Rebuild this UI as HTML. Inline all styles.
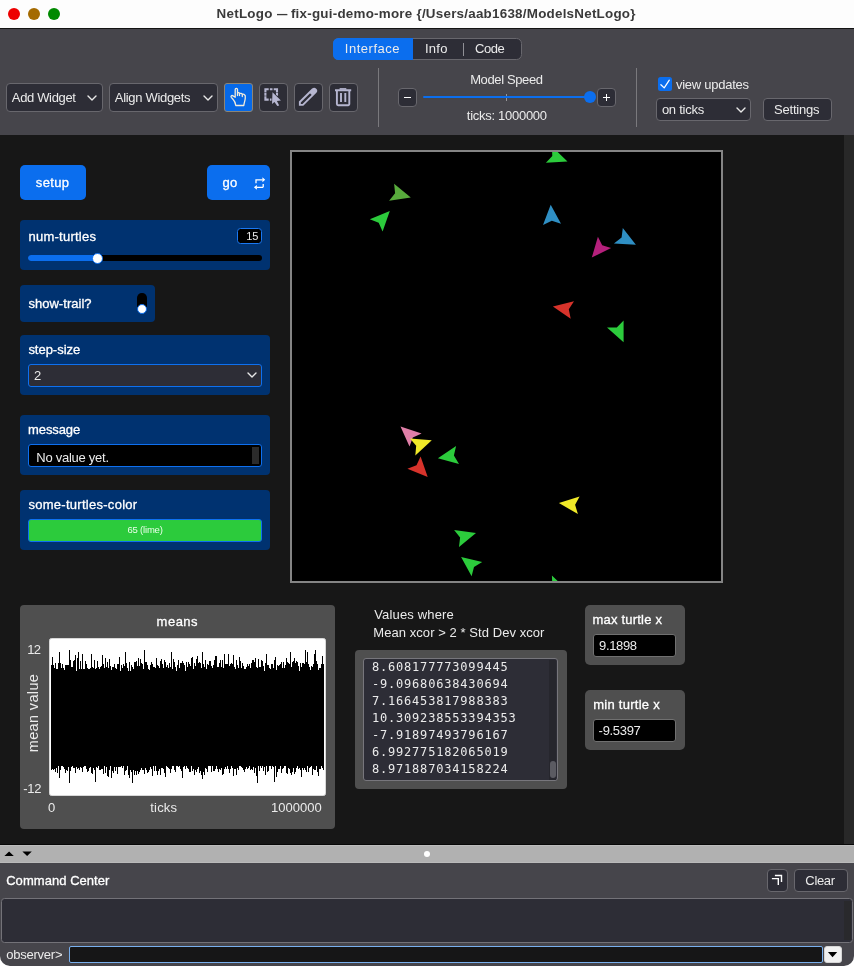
<!DOCTYPE html>
<html lang="en"><head><meta charset="utf-8"><title>NetLogo — fix-gui-demo-more</title>
<style>
*{box-sizing:border-box;margin:0;padding:0}
html,body{width:854px;height:966px;overflow:hidden;background:#171717}
body{position:relative;font-family:"Liberation Sans",sans-serif;font-size:13px;color:#ebebeb}
.b{color:#fff}
#app{position:absolute;left:0;top:0;width:854px;height:966px;will-change:transform}
.a{position:absolute}
.t{position:absolute;white-space:nowrap;line-height:16px;height:16px}
.c{transform:translateX(-50%)}
.r{transform:translateX(-100%)}
#titlebar{left:0;top:0;width:854px;height:28px;background:#fdfdfd}
#titleline{left:0;top:28px;width:854px;height:1px;background:#141414}
.dot{width:12px;height:12px;border-radius:6px;top:8px}
#title{font-weight:bold;color:#3a3a3a;-webkit-text-stroke:0}
#toolbar{left:0;top:29px;width:854px;height:106px;background:#46454b}
.btn{background:#2d2d36;border:1px solid #68676d;border-radius:4px}
.blue{background:#0b6eee}
.sep{width:1px;background:#7a797d}
.wid{background:#003270;border-radius:4px}
.gray{background:#4f4f4f;border-radius:4px}
.em{display:inline-block;width:10.4px;transform:scaleX(0.776);transform-origin:0 50%}
.b{-webkit-text-stroke:0.3px currentColor}
svg{position:absolute;overflow:visible}
</style></head>
<body>
<div id="app">
<div class="a" id="titlebar"></div><div class="a" id="titleline"></div>
<div class="a dot" style="left:8px;background:#ed0000"></div>
<div class="a dot" style="left:28px;background:#a46a00"></div>
<div class="a dot" style="left:48px;background:#008a00"></div>
<div class="t b" id="title" style="left:216.62px;top:6.00px;font-size:13.4px;letter-spacing:0.239px;color:#3a3a3a;">NetLogo <span class="em">—</span> fix-gui-demo-more {/Users/aab1638/ModelsNetLogo}</div>
<div class="a" id="toolbar"></div>
<div class="a btn" style="left:333px;top:37.8px;width:189px;height:22px;border-radius:5.5px"></div>
<div class="a blue" style="left:333px;top:37.8px;width:80px;height:22px;border-radius:5.5px 0 0 5.5px"></div>
<div class="a" style="left:463px;top:43px;width:1px;height:13px;background:#909096"></div>
<div class="t" id="tx_interface" style="left:344.86px;top:41.00px;letter-spacing:0.517px;">Interface</div>
<div class="t" id="tx_info" style="left:424.98px;top:41.00px;letter-spacing:0.264px;">Info</div>
<div class="t" id="tx_code" style="left:474.98px;top:41.00px;letter-spacing:-0.476px;">Code</div>
<div class="a btn" style="left:6.2px;top:83.2px;width:96.6px;height:28.6px"></div>
<div class="t" id="tx_addw" style="left:11.85px;top:90.00px;letter-spacing:-0.348px;">Add Widget</div>
<svg style="left:87.4px;top:95px" width="10" height="6" viewBox="0 0 10 6"><path d="M1,1 L5,5 L9,1" fill="none" stroke="#e8e8e8" stroke-width="1.4" stroke-linecap="round" stroke-linejoin="round"/></svg>
<div class="a btn" style="left:109px;top:83.2px;width:108.7px;height:28.6px"></div>
<div class="t" id="tx_alignw" style="left:114.85px;top:90.00px;letter-spacing:-0.312px;">Align Widgets</div>
<svg style="left:202.5px;top:95px" width="10" height="6" viewBox="0 0 10 6"><path d="M1,1 L5,5 L9,1" fill="none" stroke="#e8e8e8" stroke-width="1.4" stroke-linecap="round" stroke-linejoin="round"/></svg>
<div class="a btn" style="left:224.2px;top:83.1px;width:28.7px;height:28.7px;background:#0669e8;border-color:#8c8576;border-radius:3px"></div>
<div class="a btn" style="left:259.2px;top:83.1px;width:28.7px;height:28.7px"></div>
<div class="a btn" style="left:294.2px;top:83.1px;width:28.7px;height:28.7px"></div>
<div class="a btn" style="left:329.2px;top:83.1px;width:28.7px;height:28.7px"></div>
<svg style="left:0;top:0" width="854" height="140" viewBox="0 0 854 140"><path d="M235.2,97.2 V89.5 a1.15,1.15 0 0 1 2.3,0 V95.6 M237.5,93 q0.3,-0.4 1.0,-0.3 t1.0,0.6 V95.6 M239.5,93.6 q0.5,-0.4 1.4,-0.2 t1.4,0.7 V96.5 M242.3,94.3 q0.7,-0.3 1.6,0 t1.35,1.5 V98 C245.2,100.5 244.3,102 243.8,105.5 H235.8 C235.4,102.5 234.6,101 233.2,99.5 L231.3,97.3 a1.1,1.1 0 0 1 1.3,-1.7 L235.2,97.2" fill="none" stroke="#f2ecdc" stroke-width="1.3" stroke-linejoin="round" stroke-linecap="round"/><path d="M265.40,92.50 V89.20 H268.70 M273.70,89.20 H277.00 V92.50 M265.40,96.30 V99.60 H268.70 M269.90,89.20 H272.50 M265.40,93.10 V95.70 M269.90,99.60 H272.50 M277.00,93.10 V95.70 " fill="none" stroke="#b6b6d0" stroke-width="2.1" stroke-linejoin="miter"/><path d="M272.5,92.3 L272.0,104.1 L274.45,102.0 L277.3,106.0 L279.2,105.5 L276.9,100.9 L280.95,100.4 Z" fill="#b6b6d0" stroke="#2d2d36" stroke-width="1.3" stroke-linejoin="round" paint-order="stroke"/><path d="M299.85,104.85 V101.98 L312.72,89.22 A2.1,2.1 0 0 1 315.68,92.18 L302.92,104.85 Z" fill="none" stroke="#b6b6d0" stroke-width="1.9" stroke-linejoin="miter"/><path d="M309.27,92.57 L312.72,89.22 A2.1,2.1 0 0 1 315.68,92.18 L312.24,95.54 Z" fill="#b6b6d0"/><path d="M335,90.3 H351.2 M336.9,91 V104 a1.2,1.2 0 0 0 1.2,1.2 H348.1 a1.2,1.2 0 0 0 1.2,-1.2 V91 M341,93 V102 M345.3,93 V102" fill="none" stroke="#b6b6d0" stroke-width="1.9"/><rect x="339.6" y="88.1" width="6.7" height="1.6" fill="#b6b6d0"/></svg>
<div class="a sep" style="left:378.1px;top:67.8px;height:59.4px"></div>
<div class="a sep" style="left:636.1px;top:67.8px;height:59.4px"></div>
<div class="a btn" style="left:398px;top:87.9px;width:19.1px;height:19.3px"></div>
<div class="a" style="left:403.8px;top:96.6px;width:7.6px;height:1.8px;background:#fff"></div>
<div class="a btn" style="left:597px;top:87.9px;width:19.1px;height:19.3px"></div>
<div class="a" style="left:602.8px;top:96.55px;width:7.5px;height:1.8px;background:#fff"></div>
<div class="a" style="left:605.55px;top:93.75px;width:1.8px;height:7.5px;background:#fff"></div>
<div class="a" style="left:506px;top:94px;width:1px;height:7px;background:#98979a"></div>
<div class="a" style="left:423px;top:95.95px;width:167px;height:2.1px;background:#0b6eee;border-radius:1px"></div>
<div class="a" style="left:583.9px;top:90.85px;width:12.3px;height:12.3px;border-radius:6.2px;background:#0b6eee"></div>
<div class="t" id="tx_speed" style="left:470.15px;top:72.00px;letter-spacing:-0.372px;">Model Speed</div>
<div class="t" id="tx_ticks" style="left:466.86px;top:108.00px;letter-spacing:-0.282px;">ticks: 1000000</div>
<div class="a blue" style="left:658px;top:77.1px;width:13.9px;height:13.9px;border-radius:2.5px"></div>
<svg style="left:658px;top:77px" width="14" height="14" viewBox="0 0 14 14"><path d="M2.9,7.7 L6.2,10.9 L11.3,3.2" fill="none" stroke="#fff" stroke-width="1.25" stroke-linecap="round" stroke-linejoin="round"/></svg>
<div class="t" id="tx_viewupd" style="left:675.91px;top:77.00px;letter-spacing:-0.254px;">view updates</div>
<div class="a btn" style="left:656.3px;top:98.2px;width:94.3px;height:22.4px"></div>
<div class="t" id="tx_onticks" style="left:661.88px;top:102.00px;letter-spacing:-0.253px;">on ticks</div>
<svg style="left:735.7px;top:106.7px" width="10" height="6" viewBox="0 0 10 6"><path d="M1,1 L5,5 L9,1" fill="none" stroke="#e8e8e8" stroke-width="1.4" stroke-linecap="round" stroke-linejoin="round"/></svg>
<div class="a btn" style="left:763.3px;top:98.2px;width:68.5px;height:22.4px"></div>
<div class="t" id="tx_settings" style="left:774.00px;top:102.00px;letter-spacing:-0.198px;">Settings</div>
<div class="a" style="left:843.8px;top:135px;width:10.2px;height:710px;background:#282828"></div>
<div class="a blue" style="left:20.25px;top:165px;width:65.75px;height:34.5px;border-radius:5px"></div>
<div class="t b" id="tx_setup" style="left:35.79px;top:175.00px;letter-spacing:0.380px;">setup</div>
<div class="a blue" style="left:206.75px;top:165px;width:63.25px;height:34.5px;border-radius:5px"></div>
<div class="t b" id="tx_go" style="left:222.50px;top:175.00px;letter-spacing:0.201px;">go</div>
<svg style="left:0;top:0" width="280" height="200" viewBox="0 0 280 200"><path d="M256,183.2 V179.8 H262.6 M263.2,187.3 H257 M263.2,184 V187.3" fill="none" stroke="#fff" stroke-width="1.3"/><path d="M262.4,177.3 L265.2,179.8 L262.4,182.2 Z M256.9,184.9 L253.9,187.3 L256.9,189.7 Z" fill="#fff"/></svg>
<div class="a wid" style="left:20.25px;top:220px;width:249.75px;height:49.5px"></div>
<div class="t b" id="tx_numt" style="left:28.52px;top:229.00px;letter-spacing:0.243px;">num-turtles</div>
<div class="a" style="left:237px;top:227.5px;width:24.75px;height:16.25px;background:#000;border:1px solid #1a78f2;border-radius:3.5px"></div>
<div class="t" id="tx_15" style="left:246.27px;top:228.00px;font-size:11px;letter-spacing:-0.187px;">15</div>
<div class="a" style="left:28.25px;top:255px;width:233.5px;height:6px;border-radius:3px;background:#000"></div>
<div class="a" style="left:28.25px;top:255px;width:70px;height:6px;border-radius:3px;background:#0b6eee"></div>
<div class="a" style="left:92.2px;top:252.85px;width:10.8px;height:10.8px;border-radius:5.4px;background:#fff;border:0.8px solid #0b6eee"></div>
<div class="a wid" style="left:20.25px;top:285px;width:134.25px;height:36.5px"></div>
<div class="t b" id="tx_showtrail" style="left:28.39px;top:296.00px;letter-spacing:0.036px;">show-trail?</div>
<div class="a" style="left:137px;top:293px;width:9.5px;height:20.25px;border-radius:4.75px;background:#000"></div>
<div class="a" style="left:136.75px;top:303.9px;width:10px;height:10px;border-radius:5px;background:#fff;border:1px solid #0b6eee"></div>
<div class="a wid" style="left:20.25px;top:335px;width:249.75px;height:59.5px"></div>
<div class="t b" id="tx_stepsize" style="left:28.39px;top:342.00px;letter-spacing:-0.025px;">step-size</div>
<div class="a" style="left:28.25px;top:364px;width:233.75px;height:22.85px;background:#2d2d36;border:1px solid #0e70f0;border-radius:3px"></div>
<div class="t" id="tx_2" style="left:34.10px;top:368.00px;">2</div>
<svg style="left:246.5px;top:372.4px" width="10" height="6" viewBox="0 0 10 6"><path d="M1,1 L5,5 L9,1" fill="none" stroke="#e8e8e8" stroke-width="1.4" stroke-linecap="round" stroke-linejoin="round"/></svg>
<div class="a wid" style="left:20.25px;top:415px;width:249.75px;height:59.5px"></div>
<div class="t b" id="tx_message" style="left:28.11px;top:422.00px;letter-spacing:-0.124px;">message</div>
<div class="a" style="left:28.25px;top:444px;width:233.75px;height:22.85px;background:#000;border:1px solid #0e70f0;border-radius:3px"></div>
<div class="a" style="left:252px;top:447px;width:7.2px;height:16.85px;background:#2b2b2b"></div>
<div class="t" id="tx_novalue" style="left:36.31px;top:450.00px;letter-spacing:-0.262px;">No value yet.</div>
<div class="a wid" style="left:20.25px;top:490px;width:249.75px;height:59.5px"></div>
<div class="t b" id="tx_stc" style="left:28.39px;top:497.00px;letter-spacing:0.279px;">some-turtles-color</div>
<div class="a" style="left:28.25px;top:519px;width:233.75px;height:22.85px;background:#2ccb3c;border:1px solid #0e70f0;border-radius:3px"></div>
<div class="t" id="tx_lime" style="left:127.50px;top:522.00px;font-size:9.5px;letter-spacing:-0.202px;color:#e9ffe9;">65 (lime)</div>
<div class="a" style="left:290px;top:150px;width:433px;height:433px;background:#000;border:2px solid #848484"></div>
<svg style="left:292px;top:152px;overflow:hidden" width="429" height="429" viewBox="0 0 429 429"><polygon fill="#2ccb3c" points="275.5,9.4 253.9,10.7 260.3,3.9 259.9,-5.5"/>
<polygon fill="#2ccb3c" points="275.5,438.4 253.9,439.7 260.3,432.9 259.9,423.5"/>
<polygon fill="#58ab3c" points="118.8,45.4 102.1,31.8 103.1,41.2 97.1,48.8"/>
<polygon fill="#2ccb3c" points="97.8,59.0 77.8,67.2 86.7,70.7 90.6,79.5"/>
<polygon fill="#2f8fc4" points="258.7,52.8 251.0,73.0 259.8,68.8 269.0,71.7"/>
<polygon fill="#2f8fc4" points="343.9,92.7 330.8,76.1 329.6,85.4 321.9,91.4"/>
<polygon fill="#b5207c" points="299.8,105.6 305.9,84.8 310.2,93.2 319.1,96.0"/>
<polygon fill="#d7332b" points="260.9,154.4 282.0,149.2 276.8,157.3 278.7,166.7"/>
<polygon fill="#2ccb3c" points="331.6,190.3 315.0,175.6 324.8,175.4 331.6,168.5"/>
<polygon fill="#e07fa8" points="108.5,274.4 129.6,281.4 120.8,285.5 117.5,294.6"/>
<polygon fill="#f0e928" points="139.8,288.3 118.0,286.4 124.2,293.8 123.3,303.6"/>
<polygon fill="#2ccb3c" points="145.9,306.2 164.1,294.1 161.9,303.6 167.0,312.0"/>
<polygon fill="#d7332b" points="135.7,325.0 115.4,316.7 124.5,313.3 128.6,304.6"/>
<polygon fill="#f0e928" points="266.9,351.1 287.6,344.4 283.1,352.8 285.9,362.0"/>
<polygon fill="#2ccb3c" points="184.0,381.0 162.1,378.1 168.1,385.5 167.0,395.0"/>
<polygon fill="#2ccb3c" points="169.1,405.0 190.2,409.9 182.0,414.9 179.6,424.3"/></svg>
<div class="a gray" style="left:20.25px;top:605px;width:314.75px;height:224px"></div>
<div class="t b" id="tx_means" style="left:156.57px;top:614.00px;letter-spacing:0.502px;">means</div>
<div class="a" style="left:48.5px;top:638.3px;width:277px;height:157.7px;background:#fff;border:1px solid #d8d8d8;border-radius:2.5px"></div>
<svg style="left:48px;top:638px" width="278" height="159" viewBox="0 0 278 159" shape-rendering="crispEdges"><path fill="#000" d="M3.0,80.0V27.2H4.0V19.1H5.0V26.6H6.0V29.8H7.0V25.3H8.0V31.0H9.0V31.1H10.0V24.5H11.0V13.9H12.0V25.0H13.0V30.2H14.0V26.4H15.0V29.8H16.0V32.4H17.0V27.3H18.0V26.5H19.0V26.7H20.0V27.1H21.0V11.7H22.0V21.9H23.0V28.5H24.0V28.8H25.0V23.4H26.0V21.7H27.0V17.0H28.0V33.4H29.0V19.7H30.0V14.3H31.0V31.4H32.0V23.2H33.0V31.1H34.0V16.4H35.0V30.7H36.0V30.9H37.0V22.8H38.0V26.1H39.0V29.8H40.0V30.5H41.0V30.7H42.0V29.5H43.0V15.7H44.0V28.6H45.0V29.6H46.0V21.5H47.0V30.9H48.0V29.5H49.0V23.3H50.0V28.7H51.0V31.1H52.0V29.2H53.0V28.0H54.0V16.9H55.0V25.9H56.0V29.9H57.0V19.8H58.0V29.1H59.0V23.8H60.0V29.7H61.0V20.7H62.0V27.5H63.0V32.1H64.0V29.3H65.0V29.1H66.0V25.7H67.0V29.9H68.0V31.4H69.0V26.1H70.0V25.5H71.0V19.4H72.0V32.9H73.0V27.3H74.0V29.9H75.0V26.0H76.0V28.1H77.0V14.3H78.0V24.5H79.0V30.4H80.0V32.9H81.0V24.4H82.0V32.7H83.0V26.9H84.0V28.5H85.0V31.3H86.0V23.8H87.0V23.8H88.0V22.9H89.0V28.2H90.0V20.1H91.0V27.5H92.0V21.3H93.0V25.4H94.0V25.8H95.0V31.2H96.0V11.7H97.0V24.0H98.0V23.9H99.0V27.3H100.0V31.2H101.0V32.4H102.0V26.9H103.0V24.4H104.0V25.5H105.0V29.1H106.0V28.6H107.0V29.6H108.0V19.9H109.0V27.3H110.0V28.4H111.0V29.7H112.0V22.6H113.0V20.8H114.0V25.8H115.0V30.4H116.0V22.0H117.0V24.2H118.0V28.9H119.0V27.2H120.0V29.5H121.0V25.3H122.0V28.5H123.0V14.0H124.0V31.3H125.0V21.0H126.0V24.3H127.0V28.6H128.0V32.8H129.0V27.2H130.0V22.1H131.0V30.4H132.0V25.3H133.0V25.3H134.0V22.6H135.0V24.6H136.0V27.0H137.0V33.3H138.0V24.2H139.0V28.9H140.0V24.4H141.0V25.5H142.0V27.8H143.0V19.9H144.0V18.7H145.0V30.5H146.0V25.4H147.0V27.9H148.0V20.8H149.0V18.0H150.0V25.0H151.0V24.1H152.0V25.2H153.0V29.5H154.0V14.3H155.0V26.3H156.0V28.5H157.0V21.5H158.0V31.2H159.0V26.2H160.0V26.8H161.0V22.6H162.0V22.8H163.0V28.3H164.0V30.4H165.0V26.5H166.0V21.9H167.0V17.9H168.0V17.7H169.0V29.4H170.0V28.7H171.0V25.2H172.0V21.8H173.0V28.5H174.0V21.8H175.0V29.6H176.0V16.0H177.0V26.0H178.0V26.3H179.0V25.6H180.0V15.9H181.0V27.7H182.0V26.1H183.0V24.5H184.0V26.3H185.0V17.1H186.0V29.0H187.0V30.5H188.0V22.4H189.0V27.0H190.0V29.8H191.0V19.1H192.0V23.1H193.0V29.7H194.0V24.6H195.0V28.1H196.0V30.8H197.0V30.6H198.0V29.1H199.0V26.4H200.0V27.9H201.0V26.4H202.0V29.6H203.0V25.2H204.0V21.6H205.0V21.5H206.0V23.8H207.0V20.0H208.0V28.5H209.0V29.5H210.0V20.6H211.0V29.3H212.0V29.0H213.0V22.1H214.0V22.9H215.0V27.7H216.0V32.9H217.0V24.6H218.0V16.0H219.0V26.7H220.0V26.7H221.0V29.8H222.0V30.8H223.0V26.2H224.0V26.0H225.0V29.8H226.0V21.9H227.0V19.0H228.0V31.6H229.0V27.1H230.0V28.4H231.0V26.6H232.0V25.6H233.0V24.4H234.0V29.9H235.0V23.8H236.0V29.7H237.0V26.6H238.0V20.4H239.0V24.3H240.0V25.3H241.0V25.7H242.0V13.8H243.0V29.1H244.0V23.7H245.0V22.5H246.0V20.2H247.0V24.5H248.0V23.4H249.0V24.1H250.0V28.2H251.0V33.3H252.0V25.2H253.0V29.3H254.0V24.8H255.0V24.9H256.0V26.4H257.0V11.7H258.0V24.4H259.0V14.3H260.0V25.5H261.0V29.1H262.0V31.8H263.0V27.9H264.0V29.1H265.0V26.2H266.0V16.1H267.0V11.7H268.0V22.6H269.0V25.7H270.0V32.0H271.0V30.1H272.0V30.0H273.0V25.5H274.0V17.9H275.0V26.4H276.0V80V132.0H275.0V130.4H274.0V127.7H273.0V131.1H272.0V130.9H271.0V137.9H270.0V133.9H269.0V127.7H268.0V132.4H267.0V131.7H266.0V131.2H265.0V136.9H264.0V127.7H263.0V128.5H262.0V130.3H261.0V133.6H260.0V127.7H259.0V133.9H258.0V132.4H257.0V130.2H256.0V131.7H255.0V129.8H254.0V138.6H253.0V132.3H252.0V129.9H251.0V130.8H250.0V127.7H249.0V130.3H248.0V134.0H247.0V136.2H246.0V130.3H245.0V134.1H244.0V137.1H243.0V134.6H242.0V131.1H241.0V130.3H240.0V135.7H239.0V134.5H238.0V127.7H237.0V128.2H236.0V130.3H235.0V130.7H234.0V135.3H233.0V127.7H232.0V130.5H231.0V130.8H230.0V133.9H229.0V139.0H228.0V127.7H227.0V143.9H226.0V128.6H225.0V128.0H224.0V131.2H223.0V127.7H222.0V127.7H221.0V132.9H220.0V133.9H219.0V127.7H218.0V137.1H217.0V128.6H216.0V132.9H215.0V127.8H214.0V130.4H213.0V127.7H212.0V133.4H211.0V127.9H210.0V145.0H209.0V137.6H208.0V129.6H207.0V134.7H206.0V128.9H205.0V132.1H204.0V131.4H203.0V132.3H202.0V128.2H201.0V130.4H200.0V130.6H199.0V128.6H198.0V131.2H197.0V133.5H196.0V132.2H195.0V129.6H194.0V128.8H193.0V127.7H192.0V127.9H191.0V132.2H190.0V129.6H189.0V136.8H188.0V130.5H187.0V130.9H186.0V137.6H185.0V130.4H184.0V127.7H183.0V131.0H182.0V134.5H181.0V131.2H180.0V127.7H179.0V131.1H178.0V128.6H177.0V131.3H176.0V135.5H175.0V136.8H174.0V130.1H173.0V131.6H172.0V131.3H171.0V133.5H170.0V131.3H169.0V127.7H168.0V131.0H167.0V133.0H166.0V133.4H165.0V128.1H164.0V134.3H163.0V128.3H162.0V127.7H161.0V127.7H160.0V134.0H159.0V130.6H158.0V129.8H157.0V137.1H156.0V134.3H155.0V141.3H154.0V136.8H153.0V133.3H152.0V134.8H151.0V128.6H150.0V130.8H149.0V134.4H148.0V131.7H147.0V137.1H146.0V130.7H145.0V133.4H144.0V127.7H143.0V134.4H142.0V133.8H141.0V131.3H140.0V129.8H139.0V128.4H138.0V130.9H137.0V128.4H136.0V128.6H135.0V139.5H134.0V132.6H133.0V130.6H132.0V127.7H131.0V128.9H130.0V127.7H129.0V127.9H128.0V134.4H127.0V131.7H126.0V127.7H125.0V127.7H124.0V130.7H123.0V135.2H122.0V131.0H121.0V130.4H120.0V129.2H119.0V128.3H118.0V138.9H117.0V135.4H116.0V131.1H115.0V129.6H114.0V130.1H113.0V137.2H112.0V130.5H111.0V132.7H110.0V136.5H109.0V132.6H108.0V128.3H107.0V132.8H106.0V127.7H105.0V137.5H104.0V131.1H103.0V128.8H102.0V132.0H101.0V133.7H100.0V135.2H99.0V131.8H98.0V130.2H97.0V136.2H96.0V132.4H95.0V132.1H94.0V130.1H93.0V131.8H92.0V134.3H91.0V135.9H90.0V132.9H89.0V137.3H88.0V133.1H87.0V136.8H86.0V131.5H85.0V145.0H84.0V133.5H83.0V132.4H82.0V139.8H81.0V137.1H80.0V127.7H79.0V131.9H78.0V132.6H77.0V136.5H76.0V127.9H75.0V130.0H74.0V127.7H73.0V129.2H72.0V128.6H71.0V129.3H70.0V135.5H69.0V128.8H68.0V133.3H67.0V129.4H66.0V134.9H65.0V133.1H64.0V139.8H63.0V127.7H62.0V132.0H61.0V138.9H60.0V138.4H59.0V128.5H58.0V134.8H57.0V128.1H56.0V135.8H55.0V131.0H54.0V130.7H53.0V132.0H52.0V131.8H51.0V127.7H50.0V129.7H49.0V129.1H48.0V143.6H47.0V132.4H46.0V130.2H45.0V136.3H44.0V134.6H43.0V129.2H42.0V130.4H41.0V132.5H40.0V133.5H39.0V130.7H38.0V128.4H37.0V127.7H36.0V129.0H35.0V133.9H34.0V129.7H33.0V129.2H32.0V132.3H31.0V130.2H30.0V130.8H29.0V128.7H28.0V135.4H27.0V130.2H26.0V130.3H25.0V127.7H24.0V128.8H23.0V133.2H22.0V145.0H21.0V129.3H20.0V132.7H19.0V132.4H18.0V135.3H17.0V130.8H16.0V129.0H15.0V127.7H14.0V127.7H13.0V132.2H12.0V140.0H11.0V127.7H10.0V134.7H9.0V129.5H8.0V134.4H7.0V131.2H6.0V131.9H5.0V130.8H4.0V131.6H3.0Z"/></svg>
<div class="t" id="tx_12" style="left:27.22px;top:642.00px;letter-spacing:-0.708px;">12</div>
<div class="t" id="tx_m12" style="left:23.25px;top:781.00px;letter-spacing:-0.292px;">-12</div>
<div class="t" id="tx_meanvalue" style="left:33.4px;top:713.25px;font-size:14.5px;letter-spacing:0.35px;transform:translate(-50%,-50%) rotate(-90deg)">mean value</div>
<div class="t" id="tx_0" style="left:47.96px;top:800.00px;">0</div>
<div class="t" id="tx_ticksx" style="left:150.19px;top:800.00px;letter-spacing:0.221px;">ticks</div>
<div class="t" id="tx_1000000" style="left:271.00px;top:800.00px;letter-spacing:0.030px;">1000000</div>
<div class="t" id="tx_note1" style="left:374.21px;top:607.00px;letter-spacing:0.163px;">Values where</div>
<div class="t" id="tx_note2" style="left:373.31px;top:625.00px;letter-spacing:0.062px;">Mean xcor &gt; 2 * Std Dev xcor</div>
<div class="a gray" style="left:355px;top:650px;width:211.5px;height:139px"></div>
<div class="a" style="left:363.2px;top:658.4px;width:195.3px;height:122.6px;background:#2d2d36;border:1px solid #77767c;border-radius:3px"></div>
<div class="t" id="tx_out0" style="left:371.90px;top:659.00px;font-size:12px;letter-spacing:0.814px;font-family:'DejaVu Sans Mono','Liberation Mono',monospace;">8.608177773099445</div>
<div class="t" id="tx_out1" style="left:371.90px;top:676.00px;font-size:12px;letter-spacing:0.814px;font-family:'DejaVu Sans Mono','Liberation Mono',monospace;">-9.09680638430694</div>
<div class="t" id="tx_out2" style="left:371.90px;top:693.00px;font-size:12px;letter-spacing:0.814px;font-family:'DejaVu Sans Mono','Liberation Mono',monospace;">7.166453817988383</div>
<div class="t" id="tx_out3" style="left:371.90px;top:710.00px;font-size:12px;letter-spacing:0.814px;font-family:'DejaVu Sans Mono','Liberation Mono',monospace;">10.309238553394353</div>
<div class="t" id="tx_out4" style="left:371.90px;top:727.00px;font-size:12px;letter-spacing:0.814px;font-family:'DejaVu Sans Mono','Liberation Mono',monospace;">-7.91897493796167</div>
<div class="t" id="tx_out5" style="left:371.90px;top:744.00px;font-size:12px;letter-spacing:0.814px;font-family:'DejaVu Sans Mono','Liberation Mono',monospace;">6.992775182065019</div>
<div class="t" id="tx_out6" style="left:371.90px;top:761.00px;font-size:12px;letter-spacing:0.814px;font-family:'DejaVu Sans Mono','Liberation Mono',monospace;">8.971887034158224</div>
<div class="a" style="left:548.75px;top:660px;width:7.6px;height:119.5px;background:#26262d"></div>
<div class="a" style="left:549.6px;top:761.25px;width:6px;height:17px;border-radius:3px;background:#5b5b62"></div>
<div class="a gray" style="left:585px;top:605px;width:99.75px;height:59.5px;border-radius:5px"></div>
<div class="t b" id="tx_mon0" style="left:592.57px;top:612.00px;letter-spacing:0.196px;">max turtle x</div>
<div class="a" style="left:593.4px;top:634px;width:83px;height:22.7px;background:#000;border:1px solid #707070;border-radius:3px"></div>
<div class="t" id="tx_monv0" style="left:599.05px;top:638.00px;letter-spacing:-0.344px;">9.1898</div>
<div class="a gray" style="left:585px;top:690px;width:99.75px;height:59.5px;border-radius:5px"></div>
<div class="t b" id="tx_mon1" style="left:593.17px;top:697.00px;letter-spacing:0.271px;">min turtle x</div>
<div class="a" style="left:593.4px;top:719px;width:83px;height:22.7px;background:#000;border:1px solid #707070;border-radius:3px"></div>
<div class="t" id="tx_monv1" style="left:598.62px;top:723.00px;letter-spacing:-0.309px;">-9.5397</div>
<div class="a" style="left:0;top:845px;width:854px;height:18px;background:#b1b1b1"></div>
<div class="a" style="left:0;top:844px;width:854px;height:1px;background:#080808"></div>
<div class="a" style="left:0;top:845px;width:854px;height:1px;background:#bdbdbd"></div>
<div class="a" style="left:0;top:862px;width:854px;height:1px;background:#bababa"></div>
<svg style="left:0;top:845px" width="40" height="18" viewBox="0 0 40 18"><path d="M4.4,11 L9.1,6.5 L13.8,11 Z M22.4,6.6 L31.8,6.6 L27.1,11.1 Z" fill="#000"/></svg>
<div class="a" style="left:424px;top:850.85px;width:6.2px;height:6.2px;border-radius:3.1px;background:#fff"></div>
<div class="a" style="left:0;top:863px;width:854px;height:103px;background:#46454b"></div>
<div class="t b" id="tx_cc" style="left:6.18px;top:873.00px;letter-spacing:0.047px;">Command Center</div>
<div class="a btn" style="left:767.05px;top:869.05px;width:21px;height:23px"></div>
<svg style="left:0;top:860px" width="854" height="40" viewBox="0 860 854 40"><path d="M774.9,875.45 H781.5 V882 M771.9,878.6 H778.3 V885" fill="none" stroke="#fff" stroke-width="1.4"/></svg>
<div class="a btn" style="left:793.75px;top:869.05px;width:54px;height:23px"></div>
<div class="t" id="tx_clear" style="left:805.37px;top:873.00px;letter-spacing:-0.360px;">Clear</div>
<div class="a" style="left:0.7px;top:898.2px;width:852.5px;height:44.4px;background:#2d2d36;border:1px solid #737278;border-radius:3.5px"></div>
<div class="a" style="left:844.1px;top:901px;width:6.9px;height:38.6px;background:#29292c"></div>
<div class="t" id="tx_observer" style="left:6.14px;top:947.00px;letter-spacing:-0.220px;">observer&gt;</div>
<div class="a" style="left:68.85px;top:946px;width:754px;height:16.6px;background:#161617;border:1px solid #79b0ee;border-radius:2px"></div>
<div class="a" style="left:823.65px;top:946px;width:18.4px;height:16.9px;background:#f1f1f1;border:1px solid #d5d5d5;border-radius:3px"></div>
<svg style="left:0;top:0" width="854" height="966" viewBox="0 0 854 966"><path d="M827.9,952 H837.2 L832.55,957.2 Z" fill="#000"/><path d="M0,966 V956 A10,10 0 0 0 10,966 Z M854,966 V956 A10,10 0 0 1 844,966 Z" fill="#fff"/></svg>
</div>
</body></html>
